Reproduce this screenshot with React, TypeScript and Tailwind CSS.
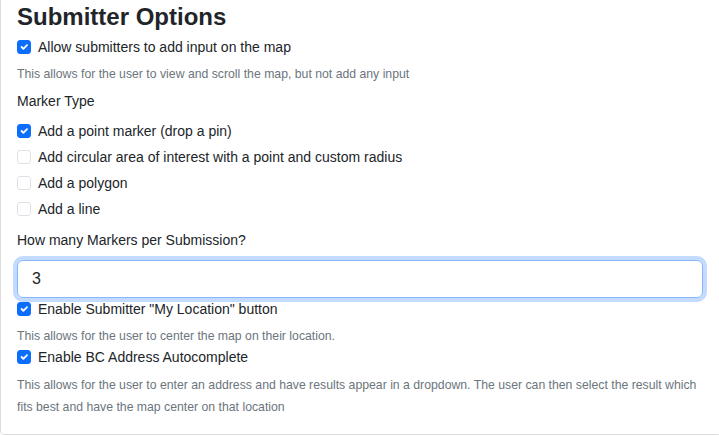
import React from "react";

function Check({ checked }: { checked: boolean }) {
  return checked ? (
    <span className="w-[14px] h-[14px] rounded-[3px] bg-[#0d6efd] border border-[#0d6efd] flex items-center justify-center shrink-0">
      <svg width="12" height="12" viewBox="0 0 20 20">
        <path d="M6 10l3 3l6-6" fill="none" stroke="#fff" strokeWidth="3" strokeLinecap="round" strokeLinejoin="round" />
      </svg>
    </span>
  ) : (
    <span className="w-[14px] h-[14px] rounded-[3px] bg-white border border-[#dee2e6] shrink-0" />
  );
}

function Row({ checked, label, h = "h-[26px]", mt = "" }: { checked: boolean; label: string; h?: string; mt?: string }) {
  return (
    <div className={`flex items-center ${h} ${mt}`}>
      <Check checked={checked} />
      <span className="ml-[7px] text-[14px] text-[#212529] leading-[21px]">{label}</span>
    </div>
  );
}

export default function App() {
  return (
    <div className="w-[719px] h-[436px] overflow-hidden bg-white" style={{ fontFamily: '"Liberation Sans", Arial, sans-serif' }}>
      <div className="w-[722px] border-l border-r border-b border-[#dcdcdc] rounded-b-[5px] px-[16px] pb-[16px] bg-white">
        <div className="pt-[2px] text-[24px] leading-[29px] font-bold text-[#212529]">Submitter Options</div>
        <Row checked={true} label="Allow submitters to add input on the map" mt="mt-[3px]" />
        <div className="mt-[5px] h-[18px] text-[12.25px] leading-[18px] text-[#6c757d]">
          This allows for the user to view and scroll the map, but not add any input
        </div>
        <div className="mt-[8px] text-[14px] leading-[21px] text-[#212529]">Marker Type</div>
        <div className="mt-[6px]">
          <Row checked={true} label="Add a point marker (drop a pin)" />
          <Row checked={false} label="Add circular area of interest with a point and custom radius" />
          <Row checked={false} label="Add a polygon" />
          <Row checked={false} label="Add a line" />
        </div>
        <div className="mt-[8px] text-[14px] leading-[21px] text-[#212529]">How many Markers per Submission?</div>
        <div className="mt-[9px] h-[38px] w-[686px] border border-[#86b7fe] rounded-[6px] shadow-[0_0_0_4px_rgba(13,110,253,0.25)] flex items-center pl-[14px] pr-[12px] text-[16px] text-[#212529]">
          3
        </div>
        <Row checked={true} label={'Enable Submitter "My Location" button'} h="h-[22px]" />
        <div className="mt-[7px] h-[18px] text-[12.25px] leading-[18px] text-[#6c757d]">
          This allows for the user to center the map on their location.
        </div>
        <Row checked={true} label="Enable BC Address Autocomplete" h="h-[22px]" mt="mt-[1px]" />
        <div className="mt-[6px] text-[12.25px] leading-[22px] text-[#6c757d] w-[688px]">
          This allows for the user to enter an address and have results appear in a dropdown. The user can then select the result which fits best and have the map center on that location
        </div>
      </div>
    </div>
  );
}
